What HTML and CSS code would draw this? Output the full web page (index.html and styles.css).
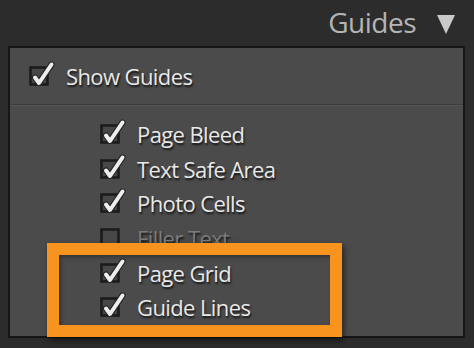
FILE: index.html
```html
<!DOCTYPE html>
<html lang="en">
<head>
<meta charset="UTF-8">
<link rel="stylesheet" href="styles.css">
<title>Guides</title>
</head>
<body>

<div class="header">
  <span class="title">Guides</span>
  <svg class="arrow" width="20" height="21" viewBox="0 0 20 21"><polygon points="1,1 19,1 10,20" fill="#c9c9c9"/></svg>
</div>

<div class="panel">
  <div class="main-row">
    <label class="item">
      <svg class="box" width="26" height="26" viewBox="0 0 26 26"><rect x="1.5" y="7.5" width="17" height="17" fill="#474747" stroke="#1c1c1c" stroke-width="2.6"/><polyline points="6,17.5 10,23 22.5,4.5" fill="none" stroke="#262626" stroke-width="6.2" stroke-linejoin="round" stroke-linecap="round"/><polyline points="6,17.5 10,23 22.5,4.5" fill="none" stroke="#eeeeee" stroke-width="4" stroke-linejoin="round" stroke-linecap="round"/></svg>
      <span>Show Guides</span>
    </label>
  </div>

  <div class="sub">
    <label class="item">
      <svg class="box" width="26" height="26" viewBox="0 0 26 26"><rect x="1.5" y="7.5" width="17" height="17" fill="#474747" stroke="#1c1c1c" stroke-width="2.6"/><polyline points="6,17.5 10,23 22.5,4.5" fill="none" stroke="#262626" stroke-width="6.2" stroke-linejoin="round" stroke-linecap="round"/><polyline points="6,17.5 10,23 22.5,4.5" fill="none" stroke="#eeeeee" stroke-width="4" stroke-linejoin="round" stroke-linecap="round"/></svg>
      <span>Page Bleed</span>
    </label>
    <label class="item">
      <svg class="box" width="26" height="26" viewBox="0 0 26 26"><rect x="1.5" y="7.5" width="17" height="17" fill="#474747" stroke="#1c1c1c" stroke-width="2.6"/><polyline points="6,17.5 10,23 22.5,4.5" fill="none" stroke="#262626" stroke-width="6.2" stroke-linejoin="round" stroke-linecap="round"/><polyline points="6,17.5 10,23 22.5,4.5" fill="none" stroke="#eeeeee" stroke-width="4" stroke-linejoin="round" stroke-linecap="round"/></svg>
      <span>Text Safe Area</span>
    </label>
    <label class="item">
      <svg class="box" width="26" height="26" viewBox="0 0 26 26"><rect x="1.5" y="7.5" width="17" height="17" fill="#474747" stroke="#1c1c1c" stroke-width="2.6"/><polyline points="6,17.5 10,23 22.5,4.5" fill="none" stroke="#262626" stroke-width="6.2" stroke-linejoin="round" stroke-linecap="round"/><polyline points="6,17.5 10,23 22.5,4.5" fill="none" stroke="#eeeeee" stroke-width="4" stroke-linejoin="round" stroke-linecap="round"/></svg>
      <span>Photo Cells</span>
    </label>
    <label class="item off">
      <svg class="box" width="26" height="26" viewBox="0 0 26 26"><rect x="1.5" y="7.5" width="17" height="17" fill="#474747" stroke="#1c1c1c" stroke-width="2.6"/></svg>
      <span>Filler Text</span>
    </label>
    <label class="item">
      <svg class="box" width="26" height="26" viewBox="0 0 26 26"><rect x="1.5" y="7.5" width="17" height="17" fill="#474747" stroke="#1c1c1c" stroke-width="2.6"/><polyline points="6,17.5 10,23 22.5,4.5" fill="none" stroke="#262626" stroke-width="6.2" stroke-linejoin="round" stroke-linecap="round"/><polyline points="6,17.5 10,23 22.5,4.5" fill="none" stroke="#eeeeee" stroke-width="4" stroke-linejoin="round" stroke-linecap="round"/></svg>
      <span>Page Grid</span>
    </label>
    <label class="item">
      <svg class="box" width="26" height="26" viewBox="0 0 26 26"><rect x="1.5" y="7.5" width="17" height="17" fill="#474747" stroke="#1c1c1c" stroke-width="2.6"/><polyline points="6,17.5 10,23 22.5,4.5" fill="none" stroke="#262626" stroke-width="6.2" stroke-linejoin="round" stroke-linecap="round"/><polyline points="6,17.5 10,23 22.5,4.5" fill="none" stroke="#eeeeee" stroke-width="4" stroke-linejoin="round" stroke-linecap="round"/></svg>
      <span>Guide Lines</span>
    </label>
  </div>
</div>

<!-- orange highlight over the last two rows -->
<div class="highlight"></div>

</body>
</html>
```

FILE: styles.css
```css
body { margin: 0; width: 474px; height: 348px; background: #2c2c2c; font-family: "Open Sans", "DejaVu Sans", sans-serif; overflow: hidden; position: relative; }
.header { height: 46px; display: flex; align-items: center; justify-content: flex-end; padding-right: 18px; box-sizing: border-box; }
.title { color: #b4b4b4; font-size: 28px; letter-spacing: -0.5px; margin-right: 20px; margin-top: -2px; }
.arrow { display: block; margin-top: 2px; }
.panel { margin-left: 8px; width: 457px; height: 292px; box-sizing: border-box; border: 2px solid #161616; background: #4b4b4b; }
.main-row { height: 56px; padding-left: 19px; display: flex; align-items: center; border-bottom: 1px solid #3c3c3c; box-shadow: 0 1px 0 #555; }
.sub { padding-left: 90px; padding-top: 12px; }
.item { display: flex; align-items: center; height: 34.6px; color: #e8e8e8; font-size: 22px; letter-spacing: -0.6px; text-shadow: 1px 2px 2px rgba(0,0,0,0.75); }
.item .box { display: block; margin-right: 11px; margin-top: -6px; }
.item.off { color: #7b7b7b; }
.highlight { position: absolute; left: 47px; top: 243px; width: 295px; height: 94px; box-sizing: border-box; border: 12px solid #f7941f; box-shadow: 2px 3px 6px rgba(0,0,0,0.55), inset 2px 2px 4px rgba(0,0,0,0.35); }
```
